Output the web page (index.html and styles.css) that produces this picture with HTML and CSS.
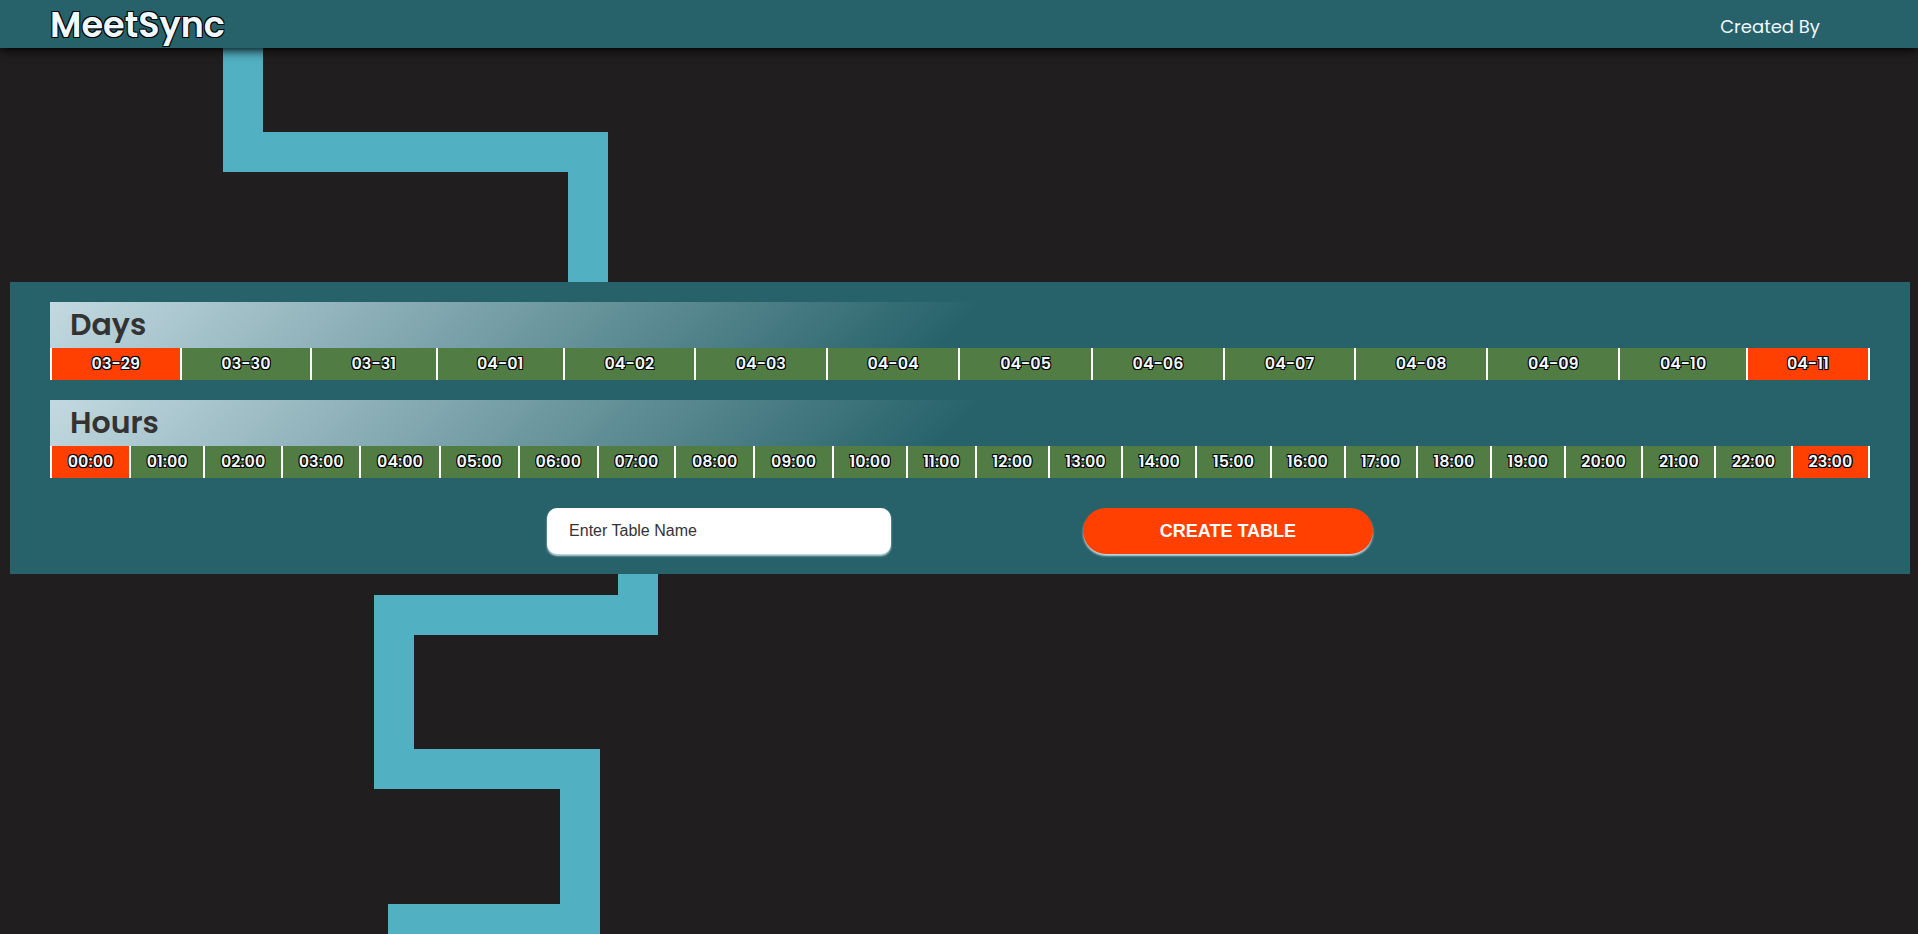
FILE: index.html
```html
<!DOCTYPE html>
<html lang="en">
<head>
<meta charset="utf-8">
<title>MeetSync</title>
<link rel="stylesheet" href="styles.css">
</head>
<body>
<svg class="trail" aria-hidden="true" fill="none" stroke="#51b0c1" stroke-width="40">
  <path d="M243 0V152H588V400"/>
  <path d="M638 500V615H394V769H580V924H388"/>
  <path d="M580 904V1000"/>
</svg>
<header class="topbar">
  <h1 class="brand">MeetSync</h1>
  <a class="credit" href="#">Created By</a>
</header>
<main class="page">
  <form class="planner">
    <section class="group">
      <h2 class="group-title">Days</h2>
      <table class="slots days">
        <tr>
          <td class="edge">03-29</td><td>03-30</td><td>03-31</td><td>04-01</td><td>04-02</td><td>04-03</td><td>04-04</td><td>04-05</td><td>04-06</td><td>04-07</td><td>04-08</td><td>04-09</td><td>04-10</td><td class="edge">04-11</td>
        </tr>
      </table>
    </section>
    <section class="group">
      <h2 class="group-title">Hours</h2>
      <table class="slots hours">
        <tr>
          <td class="edge">00:00</td><td>01:00</td><td>02:00</td><td>03:00</td><td>04:00</td><td>05:00</td><td>06:00</td><td>07:00</td><td>08:00</td><td>09:00</td><td>10:00</td><td>11:00</td><td>12:00</td><td>13:00</td><td>14:00</td><td>15:00</td><td>16:00</td><td>17:00</td><td>18:00</td><td>19:00</td><td>20:00</td><td>21:00</td><td>22:00</td><td class="edge">23:00</td>
        </tr>
      </table>
    </section>
    <div class="actions">
      <input class="name" type="text" placeholder="Enter Table Name" aria-label="Table name">
      <button class="create" type="button">CREATE TABLE</button>
    </div>
  </form>
</main>
</body>
</html>
```
FILE: styles.css
```css
* {
  box-sizing: border-box;
}

body {
  margin: 0;
  min-height: 100vh;
  display: flex;
  flex-direction: column;
  overflow: hidden;
  background: #211e1f;
  color: aliceblue;
  font-family: Poppins, Inter, sans-serif;
}

.trail {
  position: absolute;
  top: 0;
  left: 0;
  width: 100%;
  height: 100%;
  z-index: -1;
}

.topbar {
  height: 48px;
  padding: 0 98px 0 50px;
  display: flex;
  align-items: center;
  justify-content: space-between;
  background: #27626a;
  box-shadow: 0 2px 10px #000;
}

.brand {
  margin: 0;
  padding-top: 2px;
  font-size: 35px;
  font-weight: 600;
  line-height: 48px;
  text-shadow: 1px 1px 0 #000, -1px -1px 0 #000, 1px -1px 0 #000, -1px 1px 0 #000;
}

.credit {
  padding-top: 4px;
  color: inherit;
  font-size: 18px;
  text-decoration: none;
}

.page {
  flex: 1;
  display: flex;
  flex-direction: column;
  justify-content: center;
  padding: 0 8px 126px 10px;
}

.planner {
  padding: 20px 40px;
  display: flex;
  flex-direction: column;
  gap: 20px;
  background: #27626a;
}

.group-title {
  margin: 0;
  padding-left: 20px;
  background: linear-gradient(135deg, #c3d9e1 0%, #27626a 50%);
  color: #333;
  font-size: 30px;
  font-weight: 600;
  line-height: 46px;
}

.slots {
  width: 100%;
  border-collapse: collapse;
}

.slots td {
  height: 32px;
  border: solid #fff;
  border-width: 0 2px;
  background: #517d45;
  font-size: 16px;
  font-weight: 600;
  line-height: 24px;
  text-align: center;
  text-shadow: 1px 1px 0 #000, -1px -1px 0 #000, 1px -1px 0 #000, -1px 1px 0 #000;
}

.days td {
  padding: 0 32px;
}

.hours td {
  padding: 0 12px;
}

.slots .edge {
  background: #ff4000;
}

.actions {
  padding-top: 10px;
  display: flex;
  justify-content: center;
  gap: 10vw;
}

.name,
.create {
  height: 46px;
  border: 0;
  font-family: "Liberation Sans", Arial, sans-serif;
  box-shadow: 0 2px 2px #c3d9e1;
}

.name {
  width: 344px;
  padding: 0 22px;
  border-radius: 10px;
  background: #fff;
  color: #333;
  font-size: 16px;
}

.name::placeholder {
  color: #333;
}

.create {
  width: 290px;
  border-radius: 23px;
  background: #ff4000;
  color: #fff;
  font-size: 18px;
  font-weight: 700;
}
```
